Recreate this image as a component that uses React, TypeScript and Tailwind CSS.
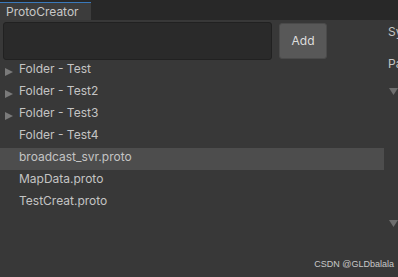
import React from "react";

const Tri = () => (
  <svg width="8" height="8" viewBox="0 0 8 8" className="shrink-0">
    <polygon points="0,0 8,4 0,8" fill="#7a7a7a" />
  </svg>
);

const DownTri = () => (
  <svg width="9" height="7" viewBox="0 0 9 7">
    <polygon points="0,0 9,0 4.5,7" fill="#6e6e6e" />
  </svg>
);

export default function App() {
  const rows: { label: string; folder: boolean; sel?: boolean }[] = [
    { label: "Folder - Test", folder: true },
    { label: "Folder - Test2", folder: true },
    { label: "Folder - Test3", folder: true },
    { label: "Folder - Test4", folder: false },
    { label: "broadcast_svr.proto", folder: false, sel: true },
    { label: "MapData.proto", folder: false },
    { label: "TestCreat.proto", folder: false },
  ];
  return (
    <div
      className="relative w-[398px] h-[277px] bg-[#383838] overflow-hidden text-[#c4c4c4]"
      style={{ fontFamily: "Inter, 'Noto Sans', sans-serif" }}
    >
      <div className="h-[20px] bg-[#282828] flex items-end">
        <div className="h-[18px] w-[91px] bg-[#3c3c3c] border-t-[1px] border-[#3a79bb] flex items-center pl-[6px] text-[12px] text-[#c8c8c8]">
          ProtoCreator
        </div>
      </div>
      <div className="flex">
        <div className="w-[384px] shrink-0">
          <div className="flex items-start pt-[2px] pl-[3px] h-[40px]">
            <div className="w-[269px] h-[38px] bg-[#2a2a2a] border border-[#212121] rounded-[3px]" />
            <div className="ml-[7px] mt-[1px] w-[48px] h-[36px] bg-[#585858] rounded-[3px] border border-[#4a4a4a] flex items-center justify-center text-[12px] text-[#dedede]">
              Add
            </div>
          </div>
          <div>
            {rows.map((r) => (
              <div
                key={r.label}
                className={`h-[22px] flex items-start ${r.sel ? "bg-[#4d4d4d]" : ""}`}
              >
                <div className="w-[19px] pl-[5px] pt-[8px] h-full">
                  {r.folder ? <Tri /> : null}
                </div>
                <div className="text-[12px] leading-[18px] text-[#c4c4c4]">{r.label}</div>
              </div>
            ))}
          </div>
        </div>
        <div className="flex-1 overflow-hidden pl-[4px] text-[12px] text-[#c4c4c4]">
          <div className="pt-[3px] leading-[18px] whitespace-nowrap">Sync</div>
          <div className="pt-[14px] leading-[18px] whitespace-nowrap">Path</div>
          <div className="pt-[15px] pl-[1px] h-[22px]">
            <DownTri />
          </div>
          <div className="pt-[125px] pl-[1px]">
            <DownTri />
          </div>
        </div>
      </div>
      <div
        className="absolute right-[4px] bottom-[6px] text-[9px] text-[#c8c8c8]"
        style={{ fontFamily: "'Liberation Sans', Arial, sans-serif" }}
      >
        CSDN @GLDbalala
      </div>
    </div>
  );
}
